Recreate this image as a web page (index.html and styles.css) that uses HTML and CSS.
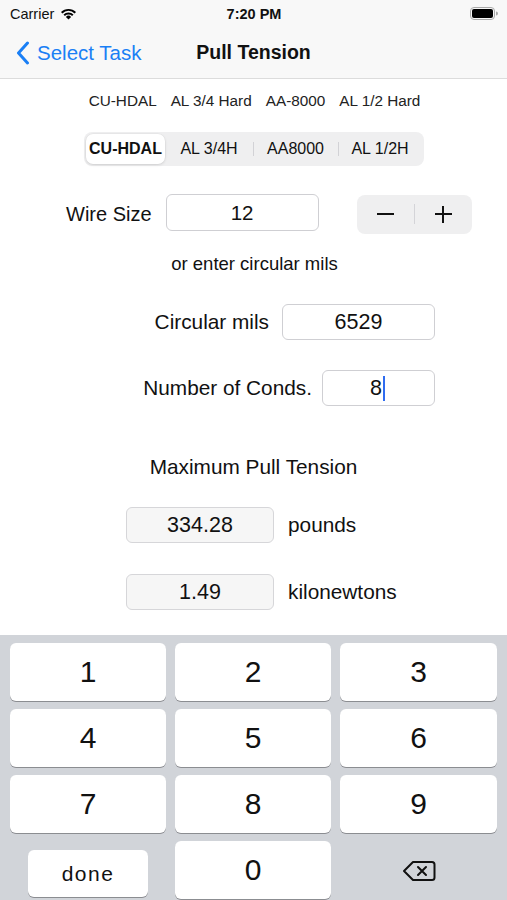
FILE: index.html
```html
<!DOCTYPE html>
<html>
<head>
<meta charset="utf-8">
<link rel="stylesheet" href="styles.css">
</head>
<body>
<div class="screen">
  <div class="topbar">
    <div class="status">
      <div class="status-left">
        <span class="carrier">Carrier</span>
        <svg class="wifi" width="17" height="13" viewBox="0 0 17 13">
          <path d="M8.5 12.6 L5.9 9.9 A3.7 3.7 0 0 1 11.1 9.9 Z" fill="#000"/>
          <path d="M3.5 7.5 A7.1 7.1 0 0 1 13.5 7.5 L12.1 8.9 A5.1 5.1 0 0 0 4.9 8.9 Z" fill="#000"/>
          <path d="M1 5 A10.6 10.6 0 0 1 16 5 L14.6 6.4 A8.6 8.6 0 0 0 2.4 6.4 Z" fill="#000"/>
        </svg>
      </div>
      <div class="time">7:20 PM</div>
      <div class="status-right">
        <svg width="28" height="13" viewBox="0 0 28 13">
          <rect x="0.5" y="0.5" width="24" height="12" rx="3.5" fill="none" stroke="#a9a9a9"/>
          <rect x="2" y="2" width="21" height="9" rx="2" fill="#000"/>
          <path d="M26 4.5 A2 2 0 0 1 26 8.5 Z" fill="#a9a9a9"/>
        </svg>
      </div>
    </div>
    <div class="nav">
      <div class="back">
        <svg class="chev" width="14" height="24" viewBox="0 0 14 24">
          <path d="M11.5 2 L2.5 12 L11.5 22" fill="none" stroke="#1a7ff5" stroke-width="3" stroke-linecap="round" stroke-linejoin="round"/>
        </svg>
        <span>Select Task</span>
      </div>
      <div class="title">Pull Tension</div>
    </div>
  </div>

  <div class="content">
    <div class="types">
      <span>CU-HDAL</span>
      <span>AL 3/4 Hard</span>
      <span>AA-8000</span>
      <span>AL 1/2 Hard</span>
    </div>

    <div class="seg-wrap">
      <div class="seg">
        <div class="seg-item sel w1">CU-HDAL</div>
        <div class="seg-item w2">AL 3/4H</div>
        <div class="seg-item w3 div">AA8000</div>
        <div class="seg-item w4 div">AL 1/2H</div>
      </div>
    </div>

    <div class="wire-row">
      <span class="lbl">Wire Size</span>
      <div class="field wire">12</div>
      <div class="stepper">
        <div class="step"><span class="minus"></span></div>
        <div class="step-div"></div>
        <div class="step"><span class="plus"></span></div>
      </div>
    </div>

    <div class="or">or enter circular mils</div>

    <div class="right-row r-circ">
      <span class="lbl lbl-w">Circular mils</span>
      <div class="field f-circ">6529</div>
    </div>

    <div class="right-row r-cond">
      <span class="lbl lbl-w">Number of Conds.</span>
      <div class="field f-cond"><span class="num">8</span><span class="caret"></span></div>
    </div>

    <div class="max">Maximum Pull Tension</div>

    <div class="out-row o1">
      <div class="field out">334.28</div>
      <span class="lbl lbl-w">pounds</span>
    </div>
    <div class="out-row o2">
      <div class="field out">1.49</div>
      <span class="lbl lbl-w">kilonewtons</span>
    </div>
  </div>

  <div class="keyboard">
    <div class="key">1</div>
    <div class="key">2</div>
    <div class="key">3</div>
    <div class="key">4</div>
    <div class="key">5</div>
    <div class="key">6</div>
    <div class="key">7</div>
    <div class="key">8</div>
    <div class="key">9</div>
    <div class="cell"><div class="done">done</div></div>
    <div class="key">0</div>
    <div class="cell">
      <svg class="bksp" width="34" height="22" viewBox="0 0 34 22">
        <path d="M11 2 H30 A2.5 2.5 0 0 1 32.5 4.5 V17.5 A2.5 2.5 0 0 1 30 20 H11 L2 11 Z" fill="none" stroke="#111" stroke-width="2" stroke-linejoin="round"/>
        <path d="M16 7 L24 15 M24 7 L16 15" stroke="#111" stroke-width="2" stroke-linecap="round"/>
      </svg>
    </div>
  </div>
</div>
</body>
</html>
```
FILE: styles.css
```css
* { box-sizing: border-box; }
html, body { margin: 0; padding: 0; }
body {
  width: 507px;
  height: 900px;
  overflow: hidden;
  background: #fff;
  font-family: "Liberation Sans", Arial, sans-serif;
  color: #111;
}
.screen {
  width: 507px;
  height: 900px;
  display: flex;
  flex-direction: column;
}
.topbar {
  background: #f8f8f8;
  border-bottom: 1px solid #dcdcdc;
  height: 79px;
}
.status {
  height: 27px;
  display: flex;
  align-items: center;
  justify-content: space-between;
  padding: 0 9px 0 10px;
}
.status-left { display: flex; align-items: center; gap: 6px; width: 120px; }
.carrier { font-size: 14.5px; color: #111; }
.wifi { margin-top: -1px; }
.time { font-size: 14.5px; font-weight: bold; }
.status-right { width: 120px; display: flex; justify-content: flex-end; }
.nav {
  height: 51px;
  display: flex;
  align-items: center;
  position: relative;
}
.back {
  display: flex;
  align-items: center;
  gap: 7px;
  padding-left: 16px;
  color: #1a7ff5;
  font-size: 20.5px;
}
.chev { margin-top: 1px; }
.title {
  position: absolute;
  left: 0; right: 0;
  text-align: center;
  font-size: 19.5px;
  font-weight: bold;
  pointer-events: none;
}
.content {
  flex: 1;
  display: flex;
  flex-direction: column;
}
.types {
  margin-top: 13px;
  display: flex;
  justify-content: center;
  gap: 14px;
  font-size: 15.3px;
  color: #222;
  height: 18px;
  line-height: 18px;
  padding-left: 2px;
}
.seg-wrap {
  margin-top: 22px;
  display: flex;
  padding-left: 84px;
}
.seg {
  display: flex;
  background: #efeff0;
  border-radius: 8px;
  height: 34px;
  padding: 2px;
  align-items: stretch;
}
.seg-item {
  display: flex;
  align-items: center;
  justify-content: center;
  font-size: 16px;
  color: #111;
  position: relative;
}
.seg-item.sel {
  background: #fff;
  border-radius: 7px;
  font-weight: bold;
  box-shadow: 0 1px 3px rgba(0,0,0,0.12), 0 0 0 0.5px rgba(0,0,0,0.04);
}
.seg-item.div::before {
  content: "";
  position: absolute;
  left: 0;
  top: 8px;
  bottom: 8px;
  width: 1px;
  background: #d2d2d6;
}
.w1 { width: 79px; }
.w2 { width: 88px; }
.w3 { width: 85px; }
.w4 { width: 84px; }

.lbl { font-size: 20px; color: #111; }
.lbl-w { font-size: 20.8px; }
.field {
  border: 1px solid #cfcfd3;
  border-radius: 6px;
  background: #fff;
  display: flex;
  align-items: center;
  justify-content: center;
  font-size: 21.5px;
  color: #111;
}
.wire-row {
  margin-top: 28px;
  display: flex;
  align-items: center;
  padding-left: 66px;
  height: 40px;
}
.wire { width: 153px; height: 37px; margin-left: 14px; margin-top: -3px; font-size: 20.5px; }
.stepper {
  margin-left: 38px;
  width: 115px;
  height: 39px;
  background: #efeff0;
  border-radius: 8px;
  display: flex;
  align-items: center;
}
.step { flex: 1; display: flex; align-items: center; justify-content: center; height: 100%; }
.step-div { width: 1px; height: 20px; background: #d4d4d8; }
.minus { display: block; width: 17px; height: 2px; background: #111; }
.plus { display: block; width: 17px; height: 17px; position: relative; }
.plus::before, .plus::after {
  content: "";
  position: absolute;
  background: #111;
}
.plus::before { left: 0; right: 0; top: 7.5px; height: 2px; }
.plus::after { top: 0; bottom: 0; left: 7.5px; width: 2px; }

.or {
  margin-top: 19px;
  text-align: center;
  font-size: 18.5px;
  color: #111;
  height: 22px;
  line-height: 22px;
  padding-left: 2px;
}
.right-row {
  display: flex;
  align-items: center;
  justify-content: flex-end;
  padding-right: 72px;
  height: 36px;
}
.r-circ { margin-top: 29px; gap: 13px; }
.r-cond { margin-top: 30px; gap: 10px; }
.f-circ { width: 153px; height: 36px; }
.f-cond { width: 113px; height: 36px; justify-content: flex-end; padding-right: 49px; }
.caret { display: block; width: 2px; height: 25px; background: #2f6cf0; margin-left: 1px; }
.max {
  margin-top: 49px;
  text-align: center;
  font-size: 20.8px;
  height: 24px;
  line-height: 24px;
}
.out-row {
  display: flex;
  align-items: center;
  padding-left: 126px;
  gap: 14px;
  height: 36px;
}
.o1 { margin-top: 28px; }
.o2 { margin-top: 31px; }
.out {
  width: 148px;
  height: 36px;
  background: #f6f6f6;
  border-color: #d6d6d9;
}

.keyboard {
  height: 265px;
  background: #d1d4d9;
  display: grid;
  grid-template-columns: 156px 156px 157px;
  grid-auto-rows: 57.5px;
  column-gap: 9px;
  row-gap: 8.5px;
  padding: 8px 10px 0 10px;
}
.key {
  background: #fff;
  border-radius: 6px;
  box-shadow: 0 1px 0 #8b8d91;
  display: flex;
  align-items: center;
  justify-content: center;
  font-size: 30px;
  color: #111;
}
.cell {
  display: flex;
  align-items: center;
  justify-content: center;
}
.done {
  width: 120px;
  height: 47px;
  margin-top: 8px;
  background: #fff;
  border-radius: 6px;
  box-shadow: 0 1px 0 #8b8d91;
  display: flex;
  align-items: center;
  justify-content: center;
  font-size: 21px;
  letter-spacing: 1.5px;
  color: #111;
}
.bksp { margin-top: 3px; }
```
